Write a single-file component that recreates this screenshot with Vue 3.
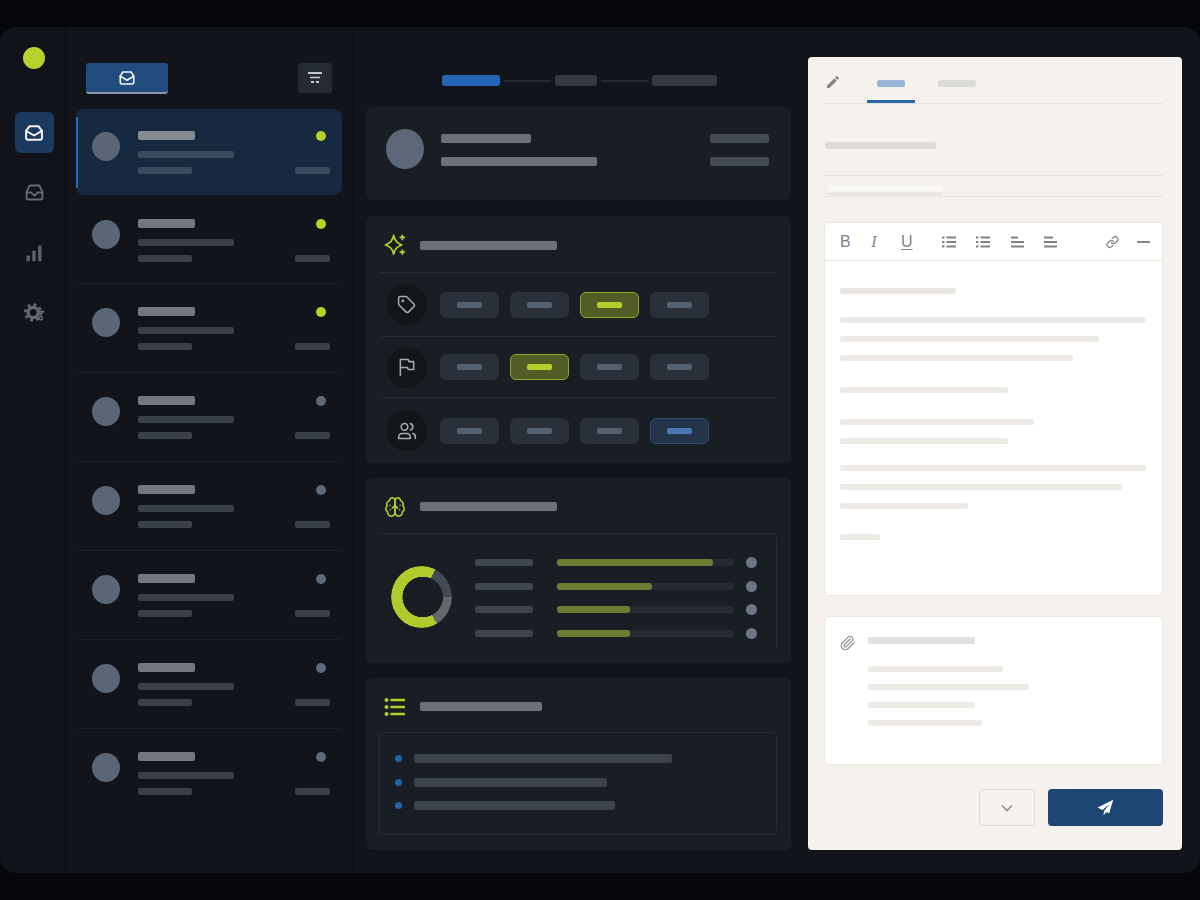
<script setup>
const rows = [
  { dot: 'lime', selected: true },
  { dot: 'lime' },
  { dot: 'lime' },
  { dot: 'grey' },
  { dot: 'grey' },
  { dot: 'grey' },
  { dot: 'grey' },
  { dot: 'grey' }
];

// 0 plain, 1 lime, 2 blue
const chipRows = [
  { icon: 'tag', chips: [0, 0, 1, 0] },
  { icon: 'flag', chips: [0, 1, 0, 0] },
  { icon: 'users', chips: [0, 0, 0, 2] }
];

const stats = [156, 95, 73, 73];
const actions = [258, 193, 201];

const editorLines = [
  { width: 116, top: 0, dark: true },
  { width: 306, top: 23 },
  { width: 259, top: 13 },
  { width: 233, top: 13 },
  { width: 168, top: 26 },
  { width: 194, top: 26 },
  { width: 168, top: 13 },
  { width: 306, top: 21 },
  { width: 282, top: 13 },
  { width: 128, top: 13 },
  { width: 40, top: 25 }
];

const attachLines = [135, 161, 107, 114];
</script>

<template>
  <div class="page">
    <div class="shell">
      <aside class="rail">
        <div class="logo" />
        <button class="rail-btn active">
          <svg width="20" height="20" viewBox="0 0 24 24" fill="none" stroke="#f1f4f8" stroke-width="2.400" stroke-linejoin="round" stroke-linecap="round">
            <path d="M2.500 9.500 6.500 4h11l4 5.500V18a2 2 0 0 1-2 2h-15a2 2 0 0 1-2-2z" />
            <path d="M2.500 9.500 12 15l9.500-5.500" />
          </svg>
        </button>
        <button class="rail-btn">
          <svg width="21" height="21" viewBox="0 0 24 24" fill="none" stroke="#616a75" stroke-width="2.200" stroke-linejoin="round" stroke-linecap="round">
            <path d="M3 11 6.500 4h11L21 11v7a2 2 0 0 1-2 2H5a2 2 0 0 1-2-2z" />
            <path d="M3 12h5l4 3.500 4-3.500h5" />
          </svg>
        </button>
        <button class="rail-btn">
          <svg width="20" height="20" viewBox="0 0 24 24" fill="#5a636f">
            <rect x="3" y="15" width="4" height="7" rx="1" />
            <rect x="10" y="9" width="4" height="13" rx="1" />
            <rect x="17" y="3" width="4" height="19" rx="1" />
          </svg>
        </button>
        <button class="rail-btn">
          <svg width="21" height="21" viewBox="0 0 24 24" fill="none" stroke="#616a75">
            <circle cx="10.500" cy="12" r="5.800" stroke-width="3.600" />
            <circle cx="10.500" cy="12" r="9" stroke-width="3" stroke-dasharray="3.500 3.570" />
            <path d="M17 11h6" stroke-width="2.400" />
            <circle cx="19" cy="18.500" r="1.900" stroke-width="1.800" />
          </svg>
        </button>
      </aside>

      <section class="list-col">
        <div class="list-head">
          <button class="inbox-btn">
            <svg width="18" height="18" viewBox="0 0 24 24" fill="none" stroke="#f1f4f8" stroke-width="2.200" stroke-linejoin="round" stroke-linecap="round">
              <path d="M3 9.500 6.500 4h11L21 9.500V18a2 2 0 0 1-2 2H5a2 2 0 0 1-2-2z" />
              <path d="M3 9.500 12 15l9-5.500" />
            </svg>
          </button>
          <button class="filter-btn">
            <svg width="16" height="12" viewBox="0 0 16 12" fill="none" stroke="#c6cbd1">
              <path d="M1 1h14" stroke-width="1.800" />
              <path d="M3 5.500h10" stroke-width="1.400" />
              <path d="M4 10h3M9 10h3" stroke-width="2" />
            </svg>
          </button>
        </div>
        <div class="rows">
          <div
            v-for="(row, i) in rows"
            :key="i"
            class="row"
            :class="{ selected: row.selected }"
          >
            <div class="avatar" />
            <div class="row-body">
              <div class="row-line">
                <div class="bar row-title" />
                <div class="row-dot" :class="row.dot" />
              </div>
              <div class="bar row-sub" />
              <div class="row-line">
                <div class="bar row-meta" />
                <div class="bar row-time" />
              </div>
            </div>
          </div>
        </div>
      </section>

      <main class="middle">
        <div class="stepper">
          <div class="step current" />
          <div class="step-line" />
          <div class="step second" />
          <div class="step-line" />
          <div class="step third" />
        </div>

        <div class="card person">
          <div class="person-avatar" />
          <div class="person-text">
            <div class="bar person-name" />
            <div class="bar person-mail" />
          </div>
          <div class="person-side">
            <div class="bar side-bar" />
            <div class="bar side-bar" />
          </div>
        </div>

        <div class="card triage">
          <div class="card-head ruled">
            <svg class="head-icon" width="22" height="22" viewBox="0 0 24 24" fill="none" stroke="#b5cf2a" stroke-width="1.900" stroke-linejoin="round" stroke-linecap="round">
              <path d="M10.500 1.500c1 6 3.500 8.500 9 10.500-5.500 1.500-8 4-9 10-1-6-3.500-8.500-9-10 5.500-2 8-4.500 9-10.500z" />
              <path d="M20 1.500v4.500M17.800 3.700h4.400M20 17.500v4.500M17.800 19.700h4.400" />
            </svg>
            <div class="bar head-title" />
          </div>
          <div v-for="row in chipRows" :key="row.icon" class="chip-row">
            <div class="chip-icon">
              <svg v-if="row.icon === 'tag'" width="19" height="19" viewBox="0 0 24 24" fill="none" stroke="#a6abb2" stroke-width="1.900" stroke-linejoin="round" stroke-linecap="round">
                <path d="M12.586 2.586A2 2 0 0 0 11.172 2H4a2 2 0 0 0-2 2v7.172a2 2 0 0 0 .586 1.414l8.704 8.704a2.426 2.426 0 0 0 3.420 0l6.580-6.580a2.426 2.426 0 0 0 0-3.420z" />
                <circle cx="7.500" cy="7.500" r=".8" fill="#a6abb2" />
              </svg>
              <svg v-else-if="row.icon === 'flag'" width="20" height="20" viewBox="0 0 24 24" fill="none" stroke="#a6abb2" stroke-width="1.900" stroke-linejoin="round" stroke-linecap="round">
                <path d="M4 22V3h9.500l1 2.500H20V15h-6.500l-1-2.500H4" />
              </svg>
              <svg v-else width="20" height="20" viewBox="0 0 24 24" fill="none" stroke="#a6abb2" stroke-width="1.900" stroke-linejoin="round" stroke-linecap="round">
                <path d="M16 21v-2a4 4 0 0 0-4-4H6a4 4 0 0 0-4 4v2z" />
                <circle cx="9" cy="7" r="4" />
                <path d="M22 21v-2a4 4 0 0 0-3-3.870" />
                <path d="M16 3.130a4 4 0 0 1 0 7.750" />
              </svg>
            </div>
            <div class="chips">
              <div
                v-for="(kind, i) in row.chips"
                :key="i"
                class="chip"
                :class="{ lime: kind === 1, blue: kind === 2 }"
              >
                <div class="chip-bar" />
              </div>
            </div>
          </div>
        </div>

        <div class="card analysis">
          <div class="card-head">
            <svg class="head-icon" width="24" height="24" viewBox="0 0 24 24" fill="none" stroke="#b5cf2a" stroke-width="1.700" stroke-linejoin="round" stroke-linecap="round">
              <path d="M12 5a3 3 0 1 0-5.997.125 4 4 0 0 0-2.526 5.770 4 4 0 0 0 .556 6.588A4 4 0 1 0 12 18Z" />
              <path d="M12 5a3 3 0 1 1 5.997.125 4 4 0 0 1 2.526 5.770 4 4 0 0 1-.556 6.588A4 4 0 1 1 12 18Z" />
              <path d="M15 13a4.500 4.500 0 0 1-3-4 4.500 4.500 0 0 1-3 4" />
              <path d="M6.500 10h.01M17.500 10h.01M7 15h.01M17 15h.01" />
            </svg>
            <div class="bar head-title" />
          </div>
          <div class="analysis-box">
            <div class="donut" />
            <div class="stats">
              <div v-for="(width, i) in stats" :key="i" class="stat">
                <div class="bar stat-label" />
                <div class="stat-track">
                  <div class="stat-fill" :style="{ width: width + 'px' }" />
                </div>
                <div class="stat-dot" />
              </div>
            </div>
          </div>
        </div>

        <div class="card next">
          <div class="card-head">
            <svg class="head-icon" width="22" height="20" viewBox="0 0 22 20" fill="#b5cf2a">
              <circle cx="2.500" cy="3" r="2" />
              <circle cx="2.500" cy="10" r="2" />
              <circle cx="2.500" cy="17" r="2" />
              <rect x="6.500" y="1.700" width="14.500" height="2.600" rx=".5" />
              <rect x="6.500" y="8.700" width="14.500" height="2.600" rx=".5" />
              <rect x="6.500" y="15.700" width="14.500" height="2.600" rx=".5" />
            </svg>
            <div class="bar head-title short" />
          </div>
          <div class="next-box">
            <div v-for="(width, i) in actions" :key="i" class="action">
              <div class="action-dot" />
              <div class="bar action-bar" :style="{ width: width + 'px' }" />
            </div>
          </div>
        </div>
      </main>

      <div class="right-col">
        <section class="panel">
          <div class="tabs">
            <svg class="pencil" width="16" height="16" viewBox="0 0 24 24" fill="#85888b">
              <path d="M3 17.250V21h3.750L17.810 9.940l-3.750-3.750L3 17.250zM20.710 7.040a1 1 0 0 0 0-1.410l-2.340-2.340a1 1 0 0 0-1.410 0l-1.830 1.830 3.750 3.750 1.830-1.830z" />
            </svg>
            <div class="tab on"><div class="tab-bar" /></div>
            <div class="tab off"><div class="tab-bar" /></div>
          </div>

          <div class="subject-label" />
          <div class="subject-field"><div class="ghost" /></div>

          <div class="editor">
            <div class="toolbar">
              <span class="tool-text bold">B</span>
              <span class="tool-text italic">I</span>
              <span class="tool-text under">U</span>
              <svg class="tool list-a" width="14" height="12" viewBox="0 0 14 12" fill="none" stroke="#7f8285" stroke-width="1.800">
                <path d="M4.500 1.500H14M4.500 6H14M4.500 10.500H14M0 1.500h2.500M0 6h2.500M0 10.500h2.500" />
              </svg>
              <svg class="tool list-b" width="14" height="12" viewBox="0 0 14 12" fill="none" stroke="#7f8285" stroke-width="1.800">
                <path d="M4.500 1.500H14M4.500 6H14M4.500 10.500H14M0 1.500h2.500M0 6h2.500M0 10.500h2.500" />
              </svg>
              <svg class="tool align-a" width="13" height="12" viewBox="0 0 13 12" fill="none" stroke="#7f8285" stroke-width="1.800">
                <path d="M0 1.500h7M0 6h13M0 10.500h13" />
              </svg>
              <svg class="tool align-b" width="13" height="12" viewBox="0 0 13 12" fill="none" stroke="#7f8285" stroke-width="1.800">
                <path d="M0 1.500h9M0 6h13M0 10.500h13" />
              </svg>
              <svg class="tool link" width="13" height="14" viewBox="0 0 24 24" fill="none" stroke="#85888b" stroke-width="2.400" stroke-linecap="round" stroke-linejoin="round">
                <path d="M10 13a5 5 0 0 0 7.540.540l3-3a5 5 0 0 0-7.070-7.070l-1.720 1.710" />
                <path d="M14 11a5 5 0 0 0-7.540-.540l-3 3a5 5 0 0 0 7.070 7.070l1.710-1.710" />
              </svg>
              <div class="tool rule" />
            </div>
            <div class="editor-body">
              <div
                v-for="(line, i) in editorLines"
                :key="i"
                class="paper-line"
                :class="{ dark: line.dark }"
                :style="{ width: line.width + 'px', marginTop: line.top + 'px' }"
              />
            </div>
          </div>

          <div class="attach">
            <svg class="clip" width="16" height="18" viewBox="0 0 24 24" fill="none" stroke="#95989b" stroke-width="2" stroke-linecap="round" stroke-linejoin="round">
              <path d="m21.440 11.050-9.190 9.190a6 6 0 0 1-8.490-8.490l8.570-8.570A4 4 0 1 1 18 8.840l-8.590 8.570a2 2 0 0 1-2.830-2.830l8.490-8.480" />
            </svg>
            <div class="attach-text">
              <div class="attach-title" />
              <div
                v-for="(width, i) in attachLines"
                :key="i"
                class="attach-line"
                :style="{ width: width + 'px' }"
              />
            </div>
          </div>

          <div class="actions">
            <button class="more">
              <svg width="12" height="8" viewBox="0 0 12 8" fill="none" stroke="#8c8f91" stroke-width="1.600">
                <path d="M1 1.500 6 6.500l5-5" />
              </svg>
            </button>
            <button class="send">
              <svg width="17" height="17" viewBox="0 0 24 24" fill="#fff">
                <path d="M23 1 1 12l6.500 3.500L18 7l-8 10-1 6 5-4.500 3 2z" />
              </svg>
            </button>
          </div>
        </section>
      </div>
    </div>
  </div>
</template>

<style scoped>
.page {
  height: 900px;
  padding-top: 27px;
  box-sizing: border-box;
  overflow: hidden;
  background: #05070b;
}

.shell {
  display: grid;
  grid-template-columns: 67px 286px 455px 392px;
  height: 846px;
  border-radius: 16px;
  background: #11151b;
  overflow: hidden;
}

button {
  display: flex;
  align-items: center;
  justify-content: center;
  padding: 0;
  border: 0;
}

.bar {
  border-radius: 2px;
  flex-shrink: 0;
  filter: blur(.4px);
}

/* rail */
.rail {
  display: flex;
  flex-direction: column;
  align-items: center;
  padding: 20px 0 0 3px;
  box-sizing: border-box;
  border-right: 2px solid #0b0e12;
  background: #10141a;
}

.logo {
  width: 22px;
  height: 22px;
  margin-bottom: 43px;
  border-radius: 50%;
  background: #b8d12c;
}

.rail-btn {
  width: 39px;
  height: 41px;
  margin-bottom: 19px;
  border-radius: 6px;
  background: transparent;
}

.rail-btn.active {
  background: #1c3a5d;
}

/* message list */
.list-col {
  padding-top: 36px;
  border-right: 1px solid #0b0e12;
}

.list-head {
  display: flex;
  justify-content: space-between;
  align-items: flex-start;
  height: 31px;
  margin-bottom: 15px;
  padding: 0 20px 0 19px;
}

.inbox-btn {
  width: 82px;
  height: 31px;
  box-sizing: border-box;
  border-bottom: 2px solid #8b97a8;
  border-radius: 3px;
  background: #214c7d;
}

.filter-btn {
  width: 34px;
  height: 30px;
  border-radius: 3px;
  background: #252b32;
}

.rows {
  padding-left: 9px;
  width: 266px;
}

.row {
  display: flex;
  gap: 18px;
  height: 89px;
  margin: 0 2px 0 3px;
  padding: 23px 10px 0 13px;
  box-sizing: border-box;
  border-bottom: 1px solid #1c2128;
}

.row:nth-child(2) {
  height: 88px;
  margin-top: 1px;
}

.row:last-child {
  border-bottom: 0;
}

.row.selected {
  position: relative;
  height: 86px;
  margin: 0;
  padding: 22px 12px 0 16px;
  border: 0;
  border-radius: 8px;
  background: #17293e;
}

.row.selected::before {
  content: '';
  position: absolute;
  left: 0;
  top: 8px;
  bottom: 7px;
  width: 2px;
  background: #2a6cc2;
}

.avatar {
  width: 28px;
  height: 29px;
  flex-shrink: 0;
  margin-top: 1px;
  border-radius: 50%;
  background: #5a6675;
}

.row-body {
  flex: 1;
}

.row-line {
  display: flex;
  justify-content: space-between;
  align-items: flex-start;
}

.row-title {
  width: 57px;
  height: 9px;
  background: #73777e;
}

.row-dot {
  width: 10px;
  height: 10px;
  margin-right: 4px;
  border-radius: 50%;
}

.row-dot.lime {
  background: #b8d12c;
}

.row-dot.grey {
  background: #5d6a7b;
}

.row-sub {
  width: 96px;
  height: 7px;
  margin: 10px 0 9px;
  background: #3a4048;
}

.row-meta {
  width: 54px;
  height: 7px;
  background: #3a4048;
}

.row-time {
  width: 35px;
  height: 7px;
  background: #3a4048;
}

.selected .row-title {
  background: #868b92;
}

.selected .row-sub,
.selected .row-meta,
.selected .row-time {
  background: #3c4a5b;
}

/* middle column */
.middle {
  padding: 48px 17px 0 13px;
}

.stepper {
  display: flex;
  align-items: center;
  gap: 4px;
  height: 11px;
  margin: 0 0 21px 76px;
}

.step {
  height: 11px;
  border-radius: 3px;
  background: #333a43;
}

.step.current {
  width: 58px;
  background: #2366b5;
}

.step.second {
  width: 42px;
}

.step.third {
  width: 65px;
}

.step-line {
  width: 47px;
  height: 2px;
  background: #252b33;
}

.card {
  margin-bottom: 15px;
  border-radius: 6px;
  background: #191e25;
}

.person {
  display: flex;
  height: 93px;
  margin-bottom: 16px;
  padding: 22px 22px 0 20px;
  box-sizing: border-box;
}

.person-avatar {
  width: 38px;
  height: 40px;
  border-radius: 50%;
  background: #5c6877;
}

.person-text {
  padding: 5px 0 0 17px;
}

.person-name {
  width: 90px;
  height: 9px;
  background: #6c7078;
}

.person-mail {
  width: 156px;
  height: 9px;
  margin-top: 14px;
  background: #6c7078;
}

.person-side {
  margin-left: auto;
  padding-top: 5px;
}

.side-bar {
  width: 59px;
  height: 9px;
  margin-bottom: 14px;
  background: #454b53;
}

.triage {
  height: 247px;
}

.card-head {
  display: flex;
  align-items: center;
  margin: 0 14px;
  padding: 2px 0 0 4px;
  height: 55px;
  box-sizing: border-box;
}

.card-head.ruled {
  height: 57px;
  border-bottom: 1px solid #2a3038;
}

.head-icon {
  width: 22px;
  flex-shrink: 0;
  margin-right: 14px;
}

.head-title {
  width: 137px;
  height: 9px;
  background: #6c7078;
}

.head-title.short {
  width: 122px;
}

.chip-row {
  display: flex;
  align-items: center;
  height: 64px;
  margin: 0 14px;
  padding-left: 6px;
  box-sizing: border-box;
  border-bottom: 1px solid #242a31;
}

.chip-row:nth-child(3) {
  height: 61px;
}

.chip-row:last-child {
  height: 65px;
  border-bottom: 0;
}

.chip-icon {
  display: flex;
  align-items: center;
  justify-content: center;
  width: 41px;
  height: 41px;
  margin-right: 13px;
  border-radius: 50%;
  background: #12161b;
}

.chips {
  display: flex;
  gap: 11px;
}

.chip {
  display: flex;
  align-items: center;
  justify-content: center;
  width: 59px;
  height: 26px;
  box-sizing: border-box;
  border-radius: 6px;
  background: #2a3039;
}

.chip-bar {
  width: 25px;
  height: 6px;
  border-radius: 2px;
  background: #566170;
  filter: blur(.4px);
}

.chip.lime {
  border: 1px solid #94a62a;
  background: #525c26;
}

.chip.lime .chip-bar {
  background: #b5cf2a;
}

.chip.blue {
  border: 1px solid #2b4b73;
  background: #243449;
}

.chip.blue .chip-bar {
  background: #4a78b4;
}

.analysis {
  height: 185px;
}

.analysis-box {
  display: flex;
  height: 115px;
  margin: 0 14px;
  padding: 25px 19px 0 11px;
  box-sizing: border-box;
  border-top: 1px solid #262c35;
  border-right: 1px solid #262c35;
  border-top-right-radius: 4px;
}

.donut {
  width: 61px;
  height: 62px;
  margin: 7px 23px 0 0;
  flex-shrink: 0;
  border-radius: 50%;
  background: conic-gradient(#b1cb2c 0 27deg, #434a53 27deg 90deg, #63686d 90deg 150deg, #b1cb2c 150deg);
  -webkit-mask: radial-gradient(circle at 52% 50%, transparent 20px, #000 20.500px);
  mask: radial-gradient(circle at 52% 50%, transparent 20px, #000 20.500px);
}

.stats {
  flex: 1;
  display: flex;
  flex-direction: column;
  gap: 16.600px;
}

.stat {
  display: flex;
  align-items: center;
  height: 7px;
}

.stat-label {
  width: 58px;
  height: 7px;
  margin-right: 24px;
  background: #3f454d;
}

.stat-track {
  width: 177px;
  height: 7px;
  margin-right: 12px;
  border-radius: 3px;
  background: #262b33;
}

.stat-fill {
  height: 100%;
  border-radius: 3px;
  background: #6e7d35;
}

.stat-dot {
  width: 11px;
  height: 11px;
  flex-shrink: 0;
  border-radius: 50%;
  background: #6c7685;
}

.next {
  height: 172px;
  margin-bottom: 0;
}

.next-box {
  height: 103px;
  margin: -1px 14px 0 13px;
  padding: 21px 0 0 15px;
  box-sizing: border-box;
  border: 1px solid #262c35;
  border-radius: 4px;
}

.action {
  display: flex;
  align-items: center;
  height: 9px;
  margin-bottom: 14.500px;
}

.action-dot {
  width: 7px;
  height: 7px;
  margin-right: 12px;
  border-radius: 50%;
  background: #2562ae;
}

.action-bar {
  height: 9px;
  background: #3b424b;
}

/* reply panel */
.right-col {
  padding: 30px 18px 23px 0;
}

.panel {
  height: 793px;
  padding: 0 19px 24px 16px;
  box-sizing: border-box;
  border-radius: 4px;
  background: #f5f2ee;
}

.tabs {
  display: flex;
  height: 47px;
  box-sizing: border-box;
  border-bottom: 1px solid #e6e3df;
}

.pencil {
  margin: 17px 0 0 1px;
}

.tab {
  height: 46px;
  padding-top: 23px;
  box-sizing: border-box;
}

.tab.on {
  width: 48px;
  margin-left: 26px;
  padding-left: 10px;
  border-bottom: 3px solid #2a66a8;
}

.tab.off {
  margin-left: 23px;
}

.tab-bar {
  height: 7px;
  border-radius: 2px;
}

.on .tab-bar {
  width: 28px;
  background: #9ab5d6;
}

.off .tab-bar {
  width: 38px;
  background: #dcdad6;
}

.subject-label {
  width: 111px;
  height: 7px;
  margin: 38px 0 26px 1px;
  border-radius: 2px;
  background: #dcdad6;
}

.subject-field {
  height: 20px;
  border-top: 1px solid #e4e1dd;
  border-bottom: 1px solid #e4e1dd;
}

.ghost {
  width: 113px;
  height: 13px;
  margin: 8px 0 0 4px;
  background: linear-gradient(#f5f2ee 0, #fbfaf8 30%, #fbfaf8 55%, #e6e3df 70%, #ebe8e4 100%);
  filter: blur(.6px);
}

.editor {
  height: 374px;
  margin-top: 25px;
  box-sizing: border-box;
  border: 1px solid #ebe8e4;
  border-radius: 4px;
  background: #fff;
}

.toolbar {
  display: flex;
  align-items: center;
  height: 38px;
  padding-left: 15px;
  box-sizing: border-box;
  border-bottom: 1px solid #ebe8e4;
}

.tool-text {
  width: 10px;
  font-family: "Liberation Sans", sans-serif;
  font-size: 16px;
  line-height: 16px;
  color: #7f8285;
  text-align: center;
}

.italic {
  margin-left: 19px;
  font-family: "Liberation Serif", serif;
  font-style: italic;
}

.under {
  margin-left: 22px;
  text-decoration: underline;
  text-underline-offset: 2px;
}

.list-a {
  margin-left: 31px;
}

.list-b {
  margin-left: 20px;
}

.align-a {
  margin-left: 21px;
}

.align-b {
  margin-left: 20px;
}

.link {
  margin-left: 49px;
}

.rule {
  width: 13px;
  height: 2px;
  margin-left: 18px;
  background: #85888b;
}

.editor-body {
  padding: 27px 0 0 15px;
}

.paper-line {
  height: 6px;
  border-radius: 2px;
  background: #eeebe7;
  filter: blur(.4px);
}

.paper-line.dark {
  background: #eae7e3;
}

.attach {
  display: flex;
  height: 149px;
  margin-top: 20px;
  padding: 17px 0 0 15px;
  box-sizing: border-box;
  border: 1px solid #ebe8e4;
  border-radius: 4px;
  background: #fff;
}

.clip {
  flex-shrink: 0;
  margin-right: 12px;
}

.attach-text {
  padding-top: 3px;
}

.attach-title {
  width: 107px;
  height: 7px;
  margin-bottom: 22px;
  border-radius: 2px;
  background: #e3e1dd;
  filter: blur(.4px);
}

.attach-line {
  height: 6px;
  margin-bottom: 12px;
  border-radius: 2px;
  background: #eeebe7;
  filter: blur(.4px);
}

.actions {
  display: flex;
  justify-content: flex-end;
  gap: 13px;
  margin-top: 24px;
}

.more {
  width: 56px;
  height: 37px;
  box-sizing: border-box;
  border: 1px solid #dedbd7;
  border-radius: 4px;
  background: #f5f2ee;
}

.send {
  width: 115px;
  height: 37px;
  border-radius: 4px;
  background: #1d4674;
}
</style>
